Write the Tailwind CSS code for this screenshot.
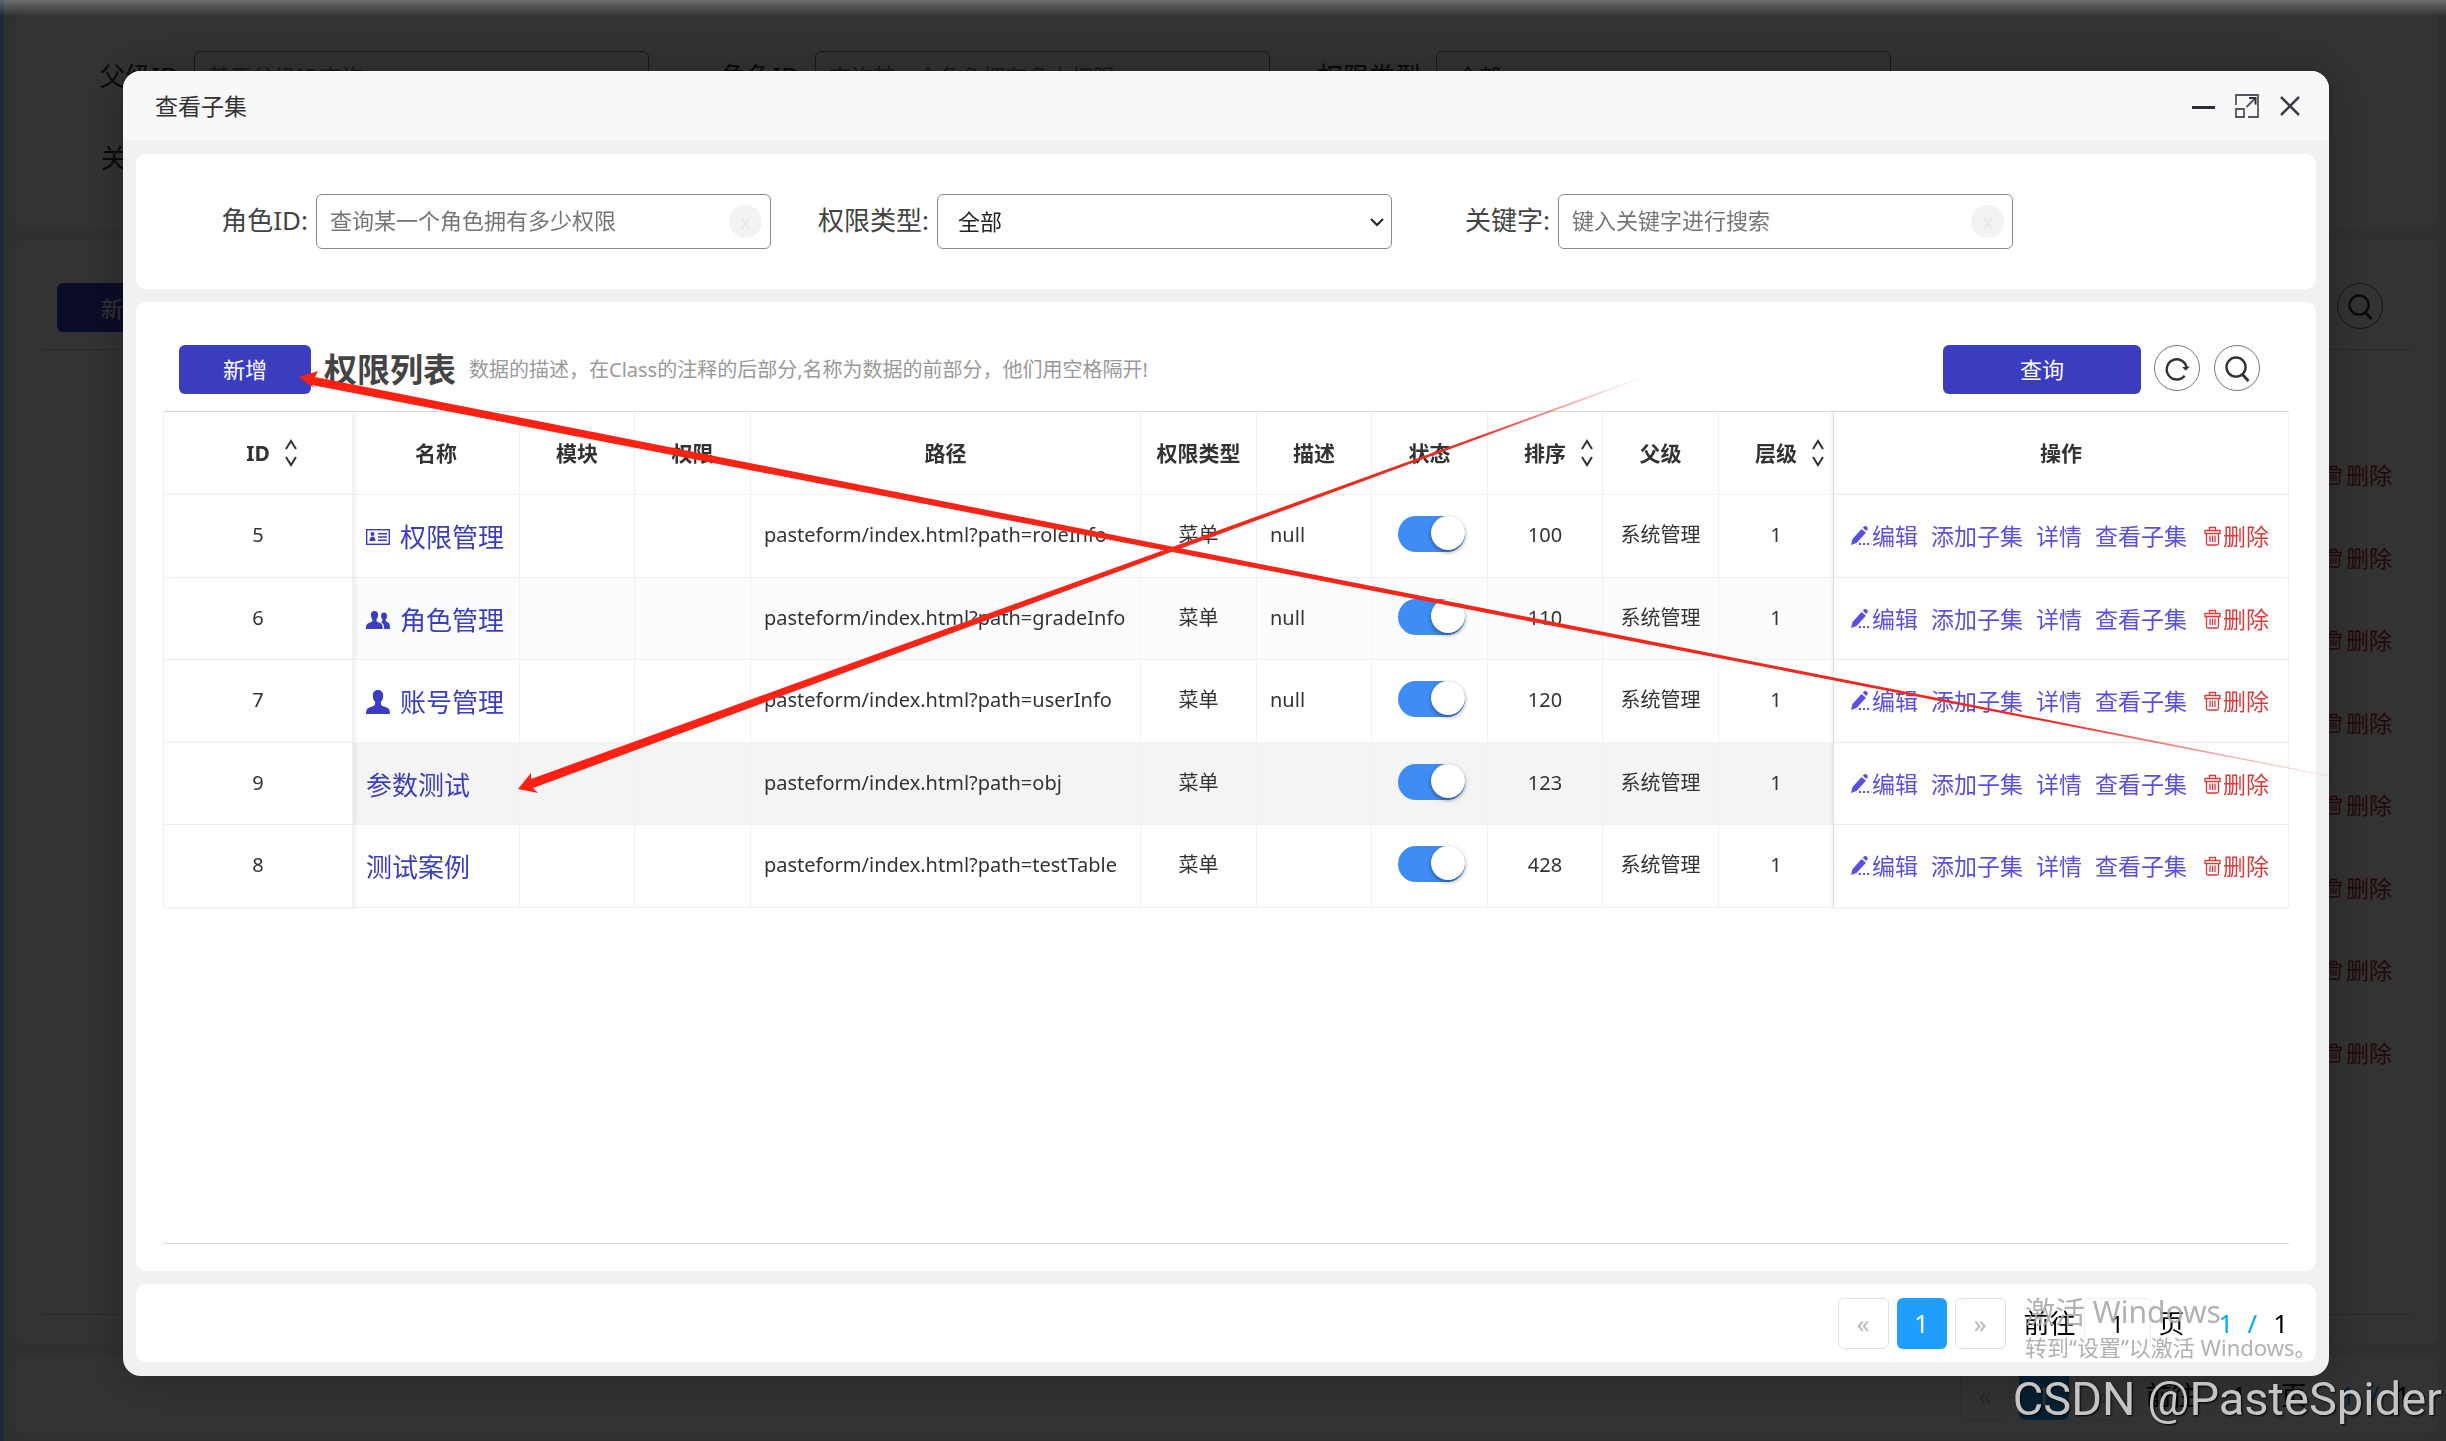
<!DOCTYPE html>
<html lang="zh-CN">
<head>
<meta charset="utf-8">
<meta name="viewport" content="width=device-width, initial-scale=1">
<title>查看子集</title>
<script src="https://cdn.jsdelivr.net/npm/@tailwindcss/browser@4"></script>
</head>
<body class="h-screen overflow-hidden bg-[#f1f1f1] font-['Noto_Sans','Noto_Sans_CJK_SC',sans-serif] text-[20px] leading-[30px] text-[#333]">

<svg class="hidden" aria-hidden="true">
  <symbol id="i-sort" viewBox="0 0 14 28"><path d="M2 10 7 2l5 8M2 18l5 8 5-8" fill="none" stroke="currentColor" stroke-width="2"/></symbol>
  <symbol id="i-pen" viewBox="0 0 20 20"><path d="M1 19 2.500 13 11.500 3l4.500 3.800L6.500 17zM12.800 1.700 14 .5c.8-.7 2-.6 2.900.2.900.8 1.200 2 .5 2.900l-1.100 1.500z" fill="currentColor"/><path d="M9 17h2v2H9zM13 17h2v2h-2zM17 17h2v2h-2z" fill="currentColor"/></symbol>
  <symbol id="i-trash" viewBox="0 0 17 20"><path d="M1 4.500h15v3H1zM5.500 4V1.500h6V4M2.500 8v9.500c0 1 .5 1.500 1.500 1.500h9c1 0 1.500-.5 1.500-1.500V8M6 9.500V16M8.500 9.500V16M11 9.500V16" fill="none" stroke="currentColor" stroke-width="1.300"/></symbol>
  <symbol id="i-search" viewBox="0 0 46 46"><circle cx="22" cy="22" r="10" fill="none" stroke="currentColor" stroke-width="2.500"/><path d="m29 30 6 6.500" fill="none" stroke="currentColor" stroke-width="3"/></symbol>
  <symbol id="i-refresh" viewBox="0 0 46 46"><path d="M31 31a10.500 10.500 0 1 1 2-9" fill="none" stroke="currentColor" stroke-width="2.500"/><path d="m28.500 22 3.500 4 4.500-4.500z" fill="currentColor"/></symbol>
  <symbol id="i-chevron" viewBox="0 0 16 10"><path d="m2 2 6 6 6-6" fill="none" stroke="currentColor" stroke-width="2"/></symbol>
</svg>

<!-- Page behind the dialog -->
<div class="flex h-full flex-col gap-[13px] border-l-4 border-[#90c8ff] pb-2 pl-[11px] pr-2 pt-[11px]" aria-hidden="true">
  <section class="flex h-[216px] shrink-0 flex-col gap-7 rounded-[10px] bg-white py-10 pl-[13px]">
    <div class="flex">
      <div class="flex w-[621px] items-center gap-2"><label for="bg-parent" class="w-[158px] pb-1 text-right text-[26px]">父级ID:</label><input id="bg-parent" class="h-[54px] w-[455px] rounded-md border border-[#767676] px-[13px] pb-1 text-[22px] placeholder-[#757575]" placeholder="基于父级ID查询"></div>
      <div class="flex w-[621px] items-center gap-2"><label for="bg-role" class="w-[158px] pb-1 text-right text-[26px]">角色ID:</label><input id="bg-role" class="h-[54px] w-[455px] rounded-md border border-[#767676] px-[13px] pb-1 text-[22px] placeholder-[#757575]" placeholder="查询某一个角色拥有多少权限"></div>
      <div class="flex w-[621px] items-center gap-2"><label for="bg-type" class="w-[158px] pb-1 text-right text-[26px]">权限类型:</label><select id="bg-type" class="h-[54px] w-[455px] appearance-none rounded-md border border-[#767676] px-5 pb-1 text-[22px]"><option>全部</option></select></div>
    </div>
    <div class="flex h-[54px] items-center"><span class="w-[158px] pb-1 text-right text-[26px]">关键字:</span></div>
  </section>
  <section class="flex min-h-0 flex-1 flex-col rounded-[10px] bg-white px-[26px] pb-7 pt-[43px]">
    <div class="flex h-[66px] items-start justify-between px-4">
      <button class="h-[49px] w-[132px] rounded-md bg-[#3a3dc0] text-[22px] text-white">新增</button>
      <button class="mr-[13px] size-[46px] rounded-full border border-[#666]" aria-label="搜索"><svg class="size-full"><use href="#i-search"/></svg></button>
    </div>
    <div class="flex-1 border-y border-[#ccc] pr-5 pt-[84px] text-right text-[23px] text-[#a82a2a]">
      <table class="w-full"><tbody>
        <tr class="h-[83px]"><td><a href="#" class="inline-flex items-center gap-1"><svg class="h-5 w-[17px]"><use href="#i-trash"/></svg>删除</a></td></tr>
        <tr class="h-[82px]"><td><a href="#" class="inline-flex items-center gap-1"><svg class="h-5 w-[17px]"><use href="#i-trash"/></svg>删除</a></td></tr>
        <tr class="h-[83px]"><td><a href="#" class="inline-flex items-center gap-1"><svg class="h-5 w-[17px]"><use href="#i-trash"/></svg>删除</a></td></tr>
        <tr class="h-[82px]"><td><a href="#" class="inline-flex items-center gap-1"><svg class="h-5 w-[17px]"><use href="#i-trash"/></svg>删除</a></td></tr>
        <tr class="h-[83px]"><td><a href="#" class="inline-flex items-center gap-1"><svg class="h-5 w-[17px]"><use href="#i-trash"/></svg>删除</a></td></tr>
        <tr class="h-[82px]"><td><a href="#" class="inline-flex items-center gap-1"><svg class="h-5 w-[17px]"><use href="#i-trash"/></svg>删除</a></td></tr>
        <tr class="h-[83px]"><td><a href="#" class="inline-flex items-center gap-1"><svg class="h-5 w-[17px]"><use href="#i-trash"/></svg>删除</a></td></tr>
        <tr class="h-[82px]"><td><a href="#" class="inline-flex items-center gap-1"><svg class="h-5 w-[17px]"><use href="#i-trash"/></svg>删除</a></td></tr>
      </tbody></table>
    </div>
  </section>
  <nav class="flex h-[77px] shrink-0 items-center justify-end gap-2 rounded-[10px] bg-white pr-7 text-[26px] text-black">
    <button class="h-[51px] w-[51px] rounded-md border border-[#e2e2e2] text-[#bbb]">«</button>
    <button class="h-[51px] w-[50px] rounded-md bg-[#1e9fff] text-white">1</button>
    <button class="h-[51px] w-[51px] rounded-md border border-[#e2e2e2] text-[#bbb]">»</button>
    <span class="ml-[10px]">前往</span>
    <input class="h-[50px] w-[67px] rounded-md border border-[#eee] text-center text-[24px]" value="1" aria-label="页码">
    <span>页</span>
    <span class="ml-[26px] text-[#01aaed]">1</span><span class="ml-[6px] text-[#01aaed]">/</span><span class="ml-2">1</span>
  </nav>
</div>
<div class="fixed inset-0 bg-black/80"></div>
<div class="fixed inset-x-0 top-0 h-4 bg-linear-to-b from-white/30 to-transparent"></div>

<!-- Dialog -->
<div role="dialog" aria-labelledby="dlg-title" class="fixed bottom-[65px] left-[123px] right-[117px] top-[71px] flex flex-col overflow-hidden rounded-[18px] bg-[#f1f1f1] shadow-[1px_1px_50px_rgba(0,0,0,0.3)]">
  <header class="flex h-[70px] shrink-0 items-center justify-between border-b border-[#eee] bg-[#f8f8f8] pl-8 pr-7">
    <h1 id="dlg-title" class="text-[23px]">查看子集</h1>
    <div class="flex items-center gap-5 text-[#2e2d3c]">
      <button aria-label="最小化"><svg class="h-6 w-[23px]" viewBox="0 0 23 24"><path d="M0 13.500h23" stroke="currentColor" stroke-width="3"/></svg></button>
      <button aria-label="最大化"><svg class="size-6" viewBox="0 0 24 24" fill="none" stroke="#55555f" stroke-width="1.800"><path d="M1 11V1h22v22H13M1 15h8v8H1zM11.500 13 20 4.500"/><path d="M14 4h6.500v6.500" stroke="#2e2d3c" stroke-width="2"/></svg></button>
      <button aria-label="关闭"><svg class="size-[22px]" viewBox="0 0 22 22"><path d="m2 2 18 18M20 2 2 20" stroke="#3e3d4a" stroke-width="2.500"/></svg></button>
    </div>
  </header>

  <div class="flex min-h-0 flex-1 flex-col gap-[13px] px-[13px] pb-[14px] pt-[13px]">
    <form class="flex shrink-0 flex-wrap rounded-[10px] bg-white py-10 pl-[14px] text-[#444]">
      <div class="flex w-[621px] items-center gap-2">
        <label for="role" class="w-[158px] pb-1 text-right text-[26px]">角色ID:</label>
        <div class="relative w-[455px]"><input id="role" class="h-[55px] w-full rounded-md border border-[#8a8a8a] px-[13px] pb-1 text-[22px] placeholder-[#757575]" placeholder="查询某一个角色拥有多少权限"><button type="button" aria-label="清除" class="absolute right-[9px] top-[11px] size-[33px] rounded-full bg-[#f3f3f3] text-[20px] text-[#e6e6e6]">x</button></div>
      </div>
      <div class="flex w-[621px] items-center gap-2">
        <label for="type" class="w-[158px] pb-1 text-right text-[26px]">权限类型:</label>
        <div class="relative w-[455px]"><select id="type" class="h-[55px] w-full appearance-none rounded-md border border-[#8a8a8a] px-5 pb-[2px] text-[22px] text-[#222]"><option>全部</option></select><svg class="pointer-events-none absolute right-[7px] top-[23px] h-[10px] w-4 text-[#222]"><use href="#i-chevron"/></svg></div>
      </div>
      <div class="flex w-[621px] items-center gap-2">
        <label for="key" class="w-[158px] pb-1 text-right text-[26px]">关键字:</label>
        <div class="relative w-[455px]"><input id="key" class="h-[55px] w-full rounded-md border border-[#8a8a8a] px-[13px] pb-1 text-[22px] placeholder-[#757575]" placeholder="键入关键字进行搜索"><button type="button" aria-label="清除" class="absolute right-[9px] top-[11px] size-[33px] rounded-full bg-[#f3f3f3] text-[20px] text-[#e6e6e6]">x</button></div>
      </div>
    </form>

    <section class="flex min-h-0 flex-1 flex-col rounded-[10px] bg-white px-[27px] pb-[27px] pt-[43px]">
      <div class="flex h-[66px] items-start pl-4 pr-[29px]">
        <button class="h-[49px] w-[132px] rounded-md bg-[#3a3dc0] pb-[2px] text-[22px] text-white">新增</button>
        <h2 class="ml-[13px] text-[33px] font-bold leading-[49px] text-[#444]">权限列表</h2>
        <p class="ml-[13px] leading-[49px] text-[#999]">数据的描述，在Class的注释的后部分,名称为数据的前部分，他们用空格隔开!</p>
        <button class="ml-auto h-[49px] w-[198px] rounded-md bg-[#3a3dc0] pb-[2px] text-[22px] text-white">查询</button>
        <button aria-label="刷新" class="ml-[13px] size-[46px] rounded-full border border-[#777]"><svg class="size-full"><use href="#i-refresh"/></svg></button>
        <button aria-label="搜索" class="ml-[14px] size-[46px] rounded-full border border-[#777]"><svg class="size-full"><use href="#i-search"/></svg></button>
      </div>

      <div class="flex-1 border-y border-[#d9dbdb]">
        <table class="w-full table-fixed border-separate border-spacing-0 border-l border-[#f0f0f0] text-center [&_td]:border-b [&_td]:border-r [&_td]:border-[#f0f2f3] [&_td]:pb-[2px] [&_th]:border-b [&_th]:border-r [&_th]:border-[#f0f2f3]">
          <colgroup><col class="w-[189px]"><col class="w-[167px]"><col class="w-[115px]"><col class="w-[116px]"><col><col class="w-[116px]"><col class="w-[115px]"><col class="w-[116px]"><col class="w-[115px]"><col class="w-[116px]"><col class="w-[115px]"><col class="w-[455px]"></colgroup>
          <thead>
            <tr class="h-[83px] text-[21px]">
              <th class="relative bg-white shadow-[3px_0_4px_rgba(0,0,0,0.06)]"><span class="flex items-center justify-center gap-[14px]">ID<svg class="-mr-7 h-7 w-[14px]"><use href="#i-sort"/></svg></span></th>
              <th>名称</th><th>模块</th><th>权限</th><th>路径</th><th>权限类型</th><th>描述</th><th>状态</th>
              <th><span class="flex items-center justify-center gap-[14px]">排序<svg class="-mr-7 h-7 w-[14px]"><use href="#i-sort"/></svg></span></th>
              <th>父级</th>
              <th><span class="flex items-center justify-center gap-[14px]">层级<svg class="-mr-7 h-7 w-[14px]"><use href="#i-sort"/></svg></span></th>
              <th class="relative bg-white shadow-[-2px_0_3px_rgba(0,0,0,0.08)]">操作</th>
            </tr>
          </thead>
          <tbody>
            <tr class="h-[83px]">
              <td class="relative bg-white shadow-[3px_0_4px_rgba(0,0,0,0.06)]">5</td>
              <td class="pl-[13px] pt-1 text-left"><a href="#" class="flex items-center gap-[10px] text-[26px] text-[#3a3dc0]"><svg class="h-4 w-6" viewBox="0 0 24 16"><rect x=".7" y=".7" width="22.600" height="14.600" fill="none" stroke="currentColor" stroke-width="1.400"/><circle cx="6.500" cy="5" r="2" fill="currentColor"/><path d="M3.500 12c0-6 6-6 6 0zM12 4h9v1.400h-9zM12 7.300h9v1.400h-9zM12 10.600h9V12h-9z" fill="currentColor"/></svg>权限管理</a></td>
              <td></td><td></td>
              <td class="pl-[13px] text-left">pasteform/index.html?path=roleInfo</td>
              <td>菜单</td><td class="pl-[13px] text-left">null</td>
              <td class="pl-[26px] text-left"><input type="checkbox" checked aria-label="状态" class="mb-[2px] block h-9 w-[67px] appearance-none rounded-full bg-[#3f8cf5] before:ml-auto before:block before:size-[34px] before:rounded-full before:bg-white before:shadow-[0_2px_4px_rgba(0,0,0,0.4)] before:content-['']"></td>
              <td>100</td><td>系统管理</td><td>1</td>
              <td class="relative bg-white pl-4 pt-[2px] shadow-[-2px_0_3px_rgba(0,0,0,0.08)]"><div class="flex items-center gap-[13px] text-[23px] text-[#5a50e0]"><a href="#" class="flex items-center gap-[2px]"><svg class="h-5 w-5"><use href="#i-pen"/></svg>编辑</a><a href="#">添加子集</a><a href="#">详情</a><a href="#">查看子集</a><a href="#" class="ml-1 flex items-center gap-[2px] text-[#dc3a3a]"><svg class="h-5 w-[17px]"><use href="#i-trash"/></svg>删除</a></div></td>
            </tr>
            <tr class="h-[82px] bg-[#fafcfe]">
              <td class="relative bg-white shadow-[3px_0_4px_rgba(0,0,0,0.06)]">6</td>
              <td class="pl-[13px] pt-1 text-left"><a href="#" class="flex items-center gap-[10px] text-[26px] text-[#3a3dc0]"><svg class="h-[18px] w-6" viewBox="0 0 24 18" fill="currentColor"><path d="M8.500 0c2.500 0 3.800 1.800 3.600 4.300-.1 2-.8 3.300-1.700 4.200-.2 2 .8 2.500 3 3.200 2.400.8 3.300 1.700 3.300 6.300H0c0-4.600 1-5.500 3.500-6.300 2.200-.7 3.200-1.200 3-3.200-.9-.9-1.500-2.200-1.600-4.200C4.700 1.800 6 0 8.500 0z"/><path d="M18 1.500c2 0 3.200 1.500 3 3.700-.1 1.600-.6 2.600-1.300 3.400-.2 1.700.5 2.200 2 2.800 1.800.7 2.300 1.600 2.300 6.600h-5.800c0-4-.8-5.500-3.400-6.800 1.200-.5 1.900-1 1.700-2.600-.8-.8-1.300-1.800-1.400-3.400-.2-2.200.9-3.700 2.900-3.700z"/></svg>角色管理</a></td>
              <td></td><td></td>
              <td class="pl-[13px] text-left">pasteform/index.html?path=gradeInfo</td>
              <td>菜单</td><td class="pl-[13px] text-left">null</td>
              <td class="pl-[26px] text-left"><input type="checkbox" checked aria-label="状态" class="mb-[2px] block h-9 w-[67px] appearance-none rounded-full bg-[#3f8cf5] before:ml-auto before:block before:size-[34px] before:rounded-full before:bg-white before:shadow-[0_2px_4px_rgba(0,0,0,0.4)] before:content-['']"></td>
              <td>110</td><td>系统管理</td><td>1</td>
              <td class="relative bg-white pl-4 pt-[2px] shadow-[-2px_0_3px_rgba(0,0,0,0.08)]"><div class="flex items-center gap-[13px] text-[23px] text-[#5a50e0]"><a href="#" class="flex items-center gap-[2px]"><svg class="h-5 w-5"><use href="#i-pen"/></svg>编辑</a><a href="#">添加子集</a><a href="#">详情</a><a href="#">查看子集</a><a href="#" class="ml-1 flex items-center gap-[2px] text-[#dc3a3a]"><svg class="h-5 w-[17px]"><use href="#i-trash"/></svg>删除</a></div></td>
            </tr>
            <tr class="h-[83px]">
              <td class="relative bg-white shadow-[3px_0_4px_rgba(0,0,0,0.06)]">7</td>
              <td class="pl-[13px] pt-1 text-left"><a href="#" class="flex items-center gap-[10px] text-[26px] text-[#3a3dc0]"><svg class="size-6" viewBox="0 0 24 24" fill="currentColor"><path d="M12 0c3.600 0 5.400 2.600 5.200 6-.1 2.800-1 4.600-2.300 6-.4 3 .8 3.800 3.800 4.800 4 1.300 5.300 2.500 5.300 7.200H0c0-4.700 1.300-5.900 5.300-7.200 3-1 4.200-1.800 3.800-4.800-1.300-1.400-2.200-3.200-2.300-6C6.600 2.600 8.400 0 12 0z"/></svg>账号管理</a></td>
              <td></td><td></td>
              <td class="pl-[13px] text-left">pasteform/index.html?path=userInfo</td>
              <td>菜单</td><td class="pl-[13px] text-left">null</td>
              <td class="pl-[26px] text-left"><input type="checkbox" checked aria-label="状态" class="mb-[2px] block h-9 w-[67px] appearance-none rounded-full bg-[#3f8cf5] before:ml-auto before:block before:size-[34px] before:rounded-full before:bg-white before:shadow-[0_2px_4px_rgba(0,0,0,0.4)] before:content-['']"></td>
              <td>120</td><td>系统管理</td><td>1</td>
              <td class="relative bg-white pl-4 pt-[2px] shadow-[-2px_0_3px_rgba(0,0,0,0.08)]"><div class="flex items-center gap-[13px] text-[23px] text-[#5a50e0]"><a href="#" class="flex items-center gap-[2px]"><svg class="h-5 w-5"><use href="#i-pen"/></svg>编辑</a><a href="#">添加子集</a><a href="#">详情</a><a href="#">查看子集</a><a href="#" class="ml-1 flex items-center gap-[2px] text-[#dc3a3a]"><svg class="h-5 w-[17px]"><use href="#i-trash"/></svg>删除</a></div></td>
            </tr>
            <tr class="h-[82px] bg-[#f4f4f4]">
              <td class="relative bg-white shadow-[3px_0_4px_rgba(0,0,0,0.06)]">9</td>
              <td class="pl-[13px] pt-1 text-left"><a href="#" class="flex items-center text-[26px] text-[#3a3dc0]">参数测试</a></td>
              <td></td><td></td>
              <td class="pl-[13px] text-left">pasteform/index.html?path=obj</td>
              <td>菜单</td><td></td>
              <td class="pl-[26px] text-left"><input type="checkbox" checked aria-label="状态" class="mb-[2px] block h-9 w-[67px] appearance-none rounded-full bg-[#3f8cf5] before:ml-auto before:block before:size-[34px] before:rounded-full before:bg-white before:shadow-[0_2px_4px_rgba(0,0,0,0.4)] before:content-['']"></td>
              <td>123</td><td>系统管理</td><td>1</td>
              <td class="relative bg-white pl-4 pt-[2px] shadow-[-2px_0_3px_rgba(0,0,0,0.08)]"><div class="flex items-center gap-[13px] text-[23px] text-[#5a50e0]"><a href="#" class="flex items-center gap-[2px]"><svg class="h-5 w-5"><use href="#i-pen"/></svg>编辑</a><a href="#">添加子集</a><a href="#">详情</a><a href="#">查看子集</a><a href="#" class="ml-1 flex items-center gap-[2px] text-[#dc3a3a]"><svg class="h-5 w-[17px]"><use href="#i-trash"/></svg>删除</a></div></td>
            </tr>
            <tr class="h-[83px]">
              <td class="relative bg-white shadow-[3px_0_4px_rgba(0,0,0,0.06)]">8</td>
              <td class="pl-[13px] pt-1 text-left"><a href="#" class="flex items-center text-[26px] text-[#3a3dc0]">测试案例</a></td>
              <td></td><td></td>
              <td class="pl-[13px] text-left">pasteform/index.html?path=testTable</td>
              <td>菜单</td><td></td>
              <td class="pl-[26px] text-left"><input type="checkbox" checked aria-label="状态" class="mb-[2px] block h-9 w-[67px] appearance-none rounded-full bg-[#3f8cf5] before:ml-auto before:block before:size-[34px] before:rounded-full before:bg-white before:shadow-[0_2px_4px_rgba(0,0,0,0.4)] before:content-['']"></td>
              <td>428</td><td>系统管理</td><td>1</td>
              <td class="relative bg-white pl-4 pt-[2px] shadow-[-2px_0_3px_rgba(0,0,0,0.08)]"><div class="flex items-center gap-[13px] text-[23px] text-[#5a50e0]"><a href="#" class="flex items-center gap-[2px]"><svg class="h-5 w-5"><use href="#i-pen"/></svg>编辑</a><a href="#">添加子集</a><a href="#">详情</a><a href="#">查看子集</a><a href="#" class="ml-1 flex items-center gap-[2px] text-[#dc3a3a]"><svg class="h-5 w-[17px]"><use href="#i-trash"/></svg>删除</a></div></td>
            </tr>
          </tbody>
        </table>
      </div>
    </section>

    <nav class="flex h-[78px] shrink-0 items-center justify-end gap-2 rounded-[10px] bg-white pr-7 text-[26px] text-black">
      <button class="h-[51px] w-[51px] rounded-md border border-[#e2e2e2] text-[#bbb]">«</button>
      <button class="h-[51px] w-[50px] rounded-md bg-[#1e9fff] text-white">1</button>
      <button class="h-[51px] w-[51px] rounded-md border border-[#e2e2e2] text-[#bbb]">»</button>
      <span class="ml-[10px]">前往</span>
      <input class="h-[50px] w-[67px] rounded-md border border-[#eee] text-center text-[24px]" value="1" aria-label="页码">
      <span>页</span>
      <span class="ml-[26px] text-[#01aaed]">1</span><span class="ml-[6px] text-[#01aaed]">/</span><span class="ml-2">1</span>
    </nav>
  </div>
</div>

<!-- System and site watermarks -->
<div class="pointer-events-none fixed bottom-[78px] right-[129px] w-[292px] text-[#a8a8a8]/90">
  <p class="text-[30px] leading-[38px]">激活 Windows</p>
  <p class="text-[22px] leading-[32px] whitespace-nowrap">转到“设置”以激活 Windows。</p>
</div>
<p class="pointer-events-none fixed bottom-[14px] right-1 font-['Roboto',sans-serif] text-[47px] leading-[56px] text-[#c4c4c4] [text-shadow:1px_1px_2px_#000]">CSDN @PasteSpider</p>

<!-- Annotation arrows -->
<svg class="pointer-events-none fixed inset-0 h-full w-full" viewBox="0 0 2446 1441" preserveAspectRatio="none" aria-hidden="true">
  <defs>
    <linearGradient id="a1" gradientUnits="userSpaceOnUse" x1="299" y1="377" x2="2352" y2="781"><stop offset="0" stop-color="#ff2012"/><stop offset=".85" stop-color="#ef2a20"/><stop offset="1" stop-color="#ef2a20" stop-opacity="0"/></linearGradient>
    <linearGradient id="a2" gradientUnits="userSpaceOnUse" x1="518" y1="789" x2="1645" y2="377"><stop offset="0" stop-color="#ff2012"/><stop offset=".85" stop-color="#ef2a20"/><stop offset="1" stop-color="#ef2a20" stop-opacity="0"/></linearGradient>
  </defs>
  <path d="M299 377 318 371 315 377 2352 780 2352 781 312 385 314 388z" fill="url(#a1)"/>
  <path d="M518 789 531 773 531 779 1645 376 1645 377 533 788 538 793z" fill="url(#a2)"/>
</svg>
</body>
</html>
